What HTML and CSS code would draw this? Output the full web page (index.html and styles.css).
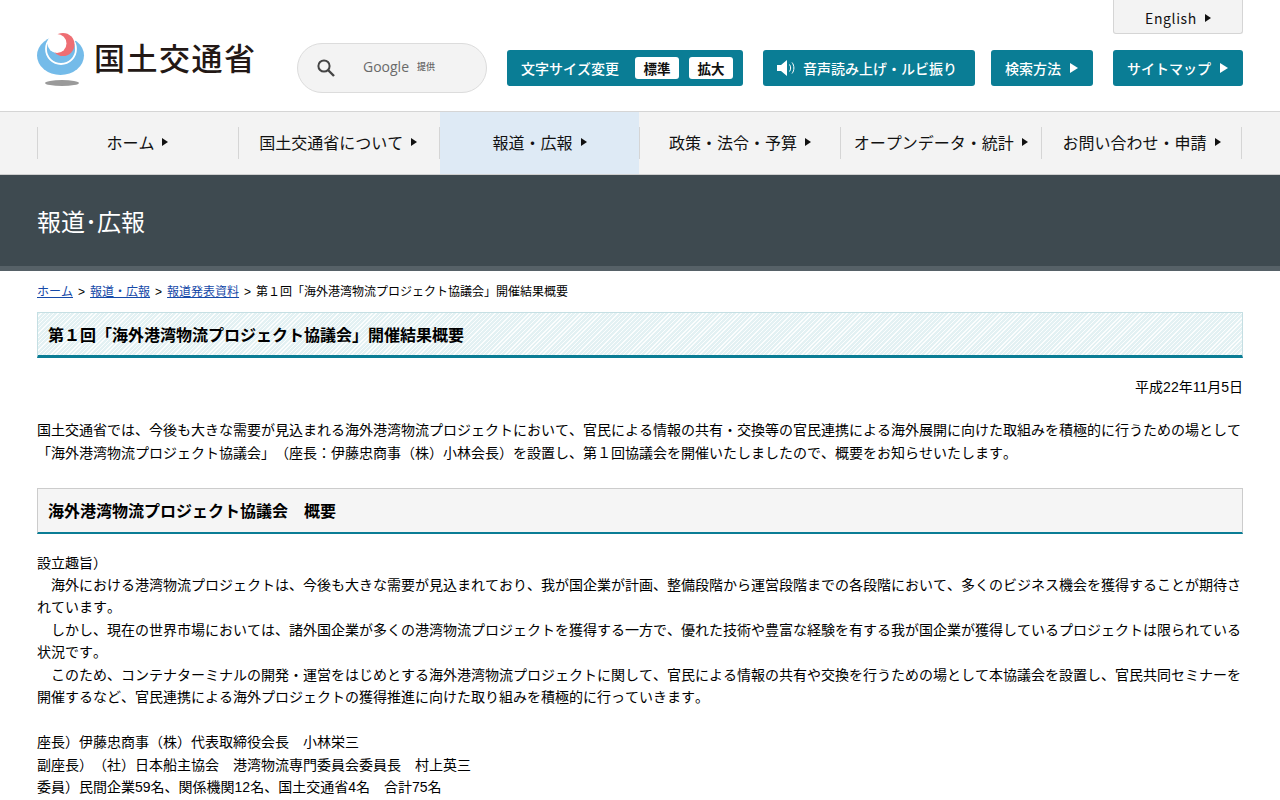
FILE: index.html
```html
<!DOCTYPE html>
<html lang="ja">
<head>
<meta charset="utf-8">
<title>第1回「海外港湾物流プロジェクト協議会」開催結果概要</title>
<link rel="stylesheet" href="styles.css">
</head>
<body>
<header class="site-header">
  <a class="logo" href="#">
    <svg class="logo-mark" width="48" height="54" viewBox="0 0 48 54" aria-hidden="true">
      <ellipse cx="25" cy="50" rx="17" ry="3" fill="#9a9a9a"/>
      <ellipse cx="23.500" cy="22.500" rx="23.500" ry="19.500" fill="#74bbe9"/>
      <circle cx="24" cy="16" r="15" fill="none" stroke="#fff" stroke-width="1.800"/>
      <circle cx="24" cy="12" r="10" fill="#fff"/>
      <path d="M15 0h24v7.500L30 12H18L14 5z" fill="#fff"/>
      <circle cx="26" cy="11.500" r="11.500" fill="#ee6e73"/>
      <circle cx="20" cy="10.500" r="9.500" fill="#fff"/>
    </svg>
    <span class="logo-text">国土交通省</span>
  </a>
  <div class="search">
    <svg width="20" height="20" viewBox="0 0 20 20" aria-hidden="true"><circle cx="8" cy="8" r="5.600" fill="none" stroke="#444" stroke-width="2"/><path d="M12 12l6 6" stroke="#444" stroke-width="2.400"/></svg>
    <span class="google">Google</span><span class="provided">提供</span>
  </div>
  <div class="tools">
    <div class="tools-top"><a class="english" href="#">English<i class="tri tri-dark"></i></a></div>
    <div class="tools-row">
      <div class="btn btn-size"><span>文字サイズ変更</span><a class="chip chip-first" href="#">標準</a><a class="chip" href="#">拡大</a></div>
      <a class="btn btn-voice" href="#">
        <svg width="19" height="16" viewBox="0 0 19 16" aria-hidden="true"><path d="M0 5h4l6-5v16l-6-5H0z" fill="#fff"/><path d="M12.500 4.500c1.500 2 1.500 5 0 7M15 2.500c2.500 3 2.500 8 0 11" fill="none" stroke="#fff" stroke-width="1"/></svg>
        <span>音声読み上げ・ルビ振り</span></a>
      <a class="btn btn-method" href="#"><span>検索方法</span><i class="tri tri-white"></i></a>
      <a class="btn btn-map" href="#"><span>サイトマップ</span><i class="tri tri-white"></i></a>
    </div>
  </div>
</header>
<nav class="gnav">
  <a class="gnav-item" href="#">ホーム<i class="tri tri-dark"></i></a>
  <a class="gnav-item" href="#">国土交通省について<i class="tri tri-dark"></i></a>
  <a class="gnav-item is-current" href="#">報道・広報<i class="tri tri-dark"></i></a>
  <a class="gnav-item" href="#">政策・法令・予算<i class="tri tri-dark"></i></a>
  <a class="gnav-item" href="#">オープンデータ・統計<i class="tri tri-dark"></i></a>
  <a class="gnav-item is-last" href="#">お問い合わせ・申請<i class="tri tri-dark"></i></a>
</nav>
<div class="band"><div class="band-title">報道･広報</div></div>
<main class="content">
  <p class="crumbs"><a href="#">ホーム</a><span class="sep">&gt;</span><a href="#">報道・広報</a><span class="sep">&gt;</span><a href="#">報道発表資料</a><span class="sep">&gt;</span>第１回「海外港湾物流プロジェクト協議会」開催結果概要</p>
  <h1 class="title">第１回「海外港湾物流プロジェクト協議会」開催結果概要</h1>
  <p class="date">平成22年11月5日</p>
  <p class="lead">国土交通省では、今後も大きな需要が見込まれる海外港湾物流プロジェクトにおいて、官民による情報の共有・交換等の官民連携による海外展開に向けた取組みを積極的に行うための場として「海外港湾物流プロジェクト協議会」（座長：伊藤忠商事（株）小林会長）を設置し、第１回協議会を開催いたしましたので、概要をお知らせいたします。</p>
  <h2 class="subtitle">海外港湾物流プロジェクト協議会　概要</h2>
  <p class="body">設立趣旨）<br>　海外における港湾物流プロジェクトは、今後も大きな需要が見込まれており、我が国企業が計画、整備段階から運営段階までの各段階において、多くのビジネス機会を獲得することが期待されています。<br>　しかし、現在の世界市場においては、諸外国企業が多くの港湾物流プロジェクトを獲得する一方で、優れた技術や豊富な経験を有する我が国企業が獲得しているプロジェクトは限られている状況です。<br>　このため、コンテナターミナルの開発・運営をはじめとする海外港湾物流プロジェクトに関して、官民による情報の共有や交換を行うための場として本協議会を設置し、官民共同セミナーを開催するなど、官民連携による海外プロジェクトの獲得推進に向けた取り組みを積極的に行っていきます。</p>
  <p class="body members">座長）伊藤忠商事（株）代表取締役会長　小林栄三<br>副座長）（社）日本船主協会　港湾物流専門委員会委員長　村上英三<br>委員）民間企業59名、関係機関12名、国土交通省4名　合計75名</p>
</main>
</body>
</html>
```
FILE: styles.css
```css
* { box-sizing: border-box; }
html, body { margin: 0; padding: 0; }
body { font-family: "Liberation Sans", "Noto Sans CJK JP", sans-serif; font-size: 14px; line-height: 22.4px; color: #000; background: #fff; text-spacing-trim: space-all; font-kerning: none; }
a { color: inherit; text-decoration: none; }
.tri { display: inline-block; width: 0; height: 0; border-style: solid; border-width: 4.5px 0 4.5px 6px; border-color: transparent; margin-left: 8px; }
.tri-dark { border-left-color: #111; }
.tri-white { border-left-color: #fff; border-width: 5.5px 0 5.5px 8px; margin-left: 9px; }

.site-header { display: flex; align-items: flex-start; height: 112px; padding: 0 37px; border-bottom: 1px solid #d5d5d5; font-family: "Noto Sans CJK JP", sans-serif; }
.logo { display: flex; align-items: flex-start; width: 260px; padding-top: 33px; }
.logo-mark { display: block; }
.logo-text { margin: 0 0 0 9px; font-size: 31px; line-height: 48px; letter-spacing: 1.5px; font-weight: 500; color: #231815; white-space: nowrap; }
.search { display: flex; align-items: center; width: 190px; height: 50px; margin-top: 43px; padding-left: 18px; background: #f3f3f3; border: 1px solid #dcdcdc; border-radius: 25px; }
.google { margin: -2px 0 0 27px; font-family: "Open Sans", sans-serif; font-size: 14px; color: #6a6a6a; }
.provided { margin: -1px 0 0 8px; font-size: 9px; font-weight: 500; color: #666; }
.tools { margin-left: 20px; width: 736px; }
.tools-top { display: flex; justify-content: flex-end; height: 50px; }
.english { display: flex; align-items: center; justify-content: center; width: 130px; height: 34px; padding-top: 3px; background: #f3f3f3; border: 1px solid #d5d5d5; border-top: 0; border-radius: 0 0 3px 3px; font-size: 14px; letter-spacing: 0.6px; line-height: 20px; color: #111; }
.tools-row { display: flex; }
.btn { display: flex; align-items: center; height: 36px; background: #0a7d95; border-radius: 3px; color: #fff; font-size: 14px; font-weight: 500; line-height: 20px; white-space: nowrap; }
.btn-size { width: 236px; padding-left: 14px; }
.chip { display: flex; align-items: center; justify-content: center; width: 44px; height: 22px; margin-left: 10px; background: #fff; border-radius: 3px; color: #111; font-size: 13.500px; font-weight: 700; }
.chip-first { margin-left: 16px; }
.btn-voice { width: 212px; margin-left: 20px; padding-left: 14px; }
.btn-voice span { margin-left: 7px; }
.btn-method { width: 102px; margin-left: 16px; padding-left: 14px; }
.btn-map { width: 130px; margin-left: 20px; padding-left: 14px; }

.gnav { display: flex; height: 63px; padding: 0 37px; background: #f3f3f3; border-bottom: 1px solid #cfcfcf; font-family: "Noto Sans CJK JP", sans-serif; }
.gnav-item { position: relative; display: flex; align-items: center; justify-content: center; flex: 0 0 auto; width: 200.830px; padding-bottom: 2px; font-size: 16px; color: #111; white-space: nowrap; }
.gnav-item::before { content: ""; position: absolute; left: 0; top: 15px; bottom: 15px; width: 1px; background: #d5d5d5; }
.gnav-item.is-last::after { content: ""; position: absolute; right: 0; top: 15px; bottom: 15px; width: 1px; background: #d5d5d5; }
.is-current { background: #deeaf5; border-left: 1px solid transparent; background-clip: padding-box; }
.is-current::before { left: -1px; }

.band { height: 96px; background: #3e4a50; border-bottom: 5px solid #566167; padding: 25px 37px 0; }
.band-title { color: #fff; font-family: "Noto Sans CJK JP", sans-serif; font-size: 24px; line-height: 42px; }

.content { padding: 0 37px; }
.crumbs { margin: 0; padding-top: 12px; font-size: 12px; line-height: 19px; }
.crumbs a { color: #1549a8; text-decoration: underline; }
.sep { margin: 0 5px; }
.title { margin: 10px 0 0; height: 46px; padding: 1px 10px 0; border: 1px solid #c5dfe3; border-bottom: 3px solid #0a7d95; background: repeating-linear-gradient(135deg, #e3f1f3 0, #e3f1f3 2px, #fbfdfd 2px, #fbfdfd 3px); font-size: 16px; font-weight: 700; line-height: 44px; }
.date { margin: 18px 0 0; text-align: right; font-kerning: normal; }
.lead { margin: 21px 0 0; }
.subtitle { margin: 24px 0 0; height: 46px; padding: 1px 10px 0; border: 1px solid #ccc; border-bottom: 2px solid #0a7d95; background: #f5f5f5; font-size: 16px; font-weight: 700; line-height: 43px; }
.body { margin: 17.350px 0 0; }
.members { margin-top: 23.050px; }
```
